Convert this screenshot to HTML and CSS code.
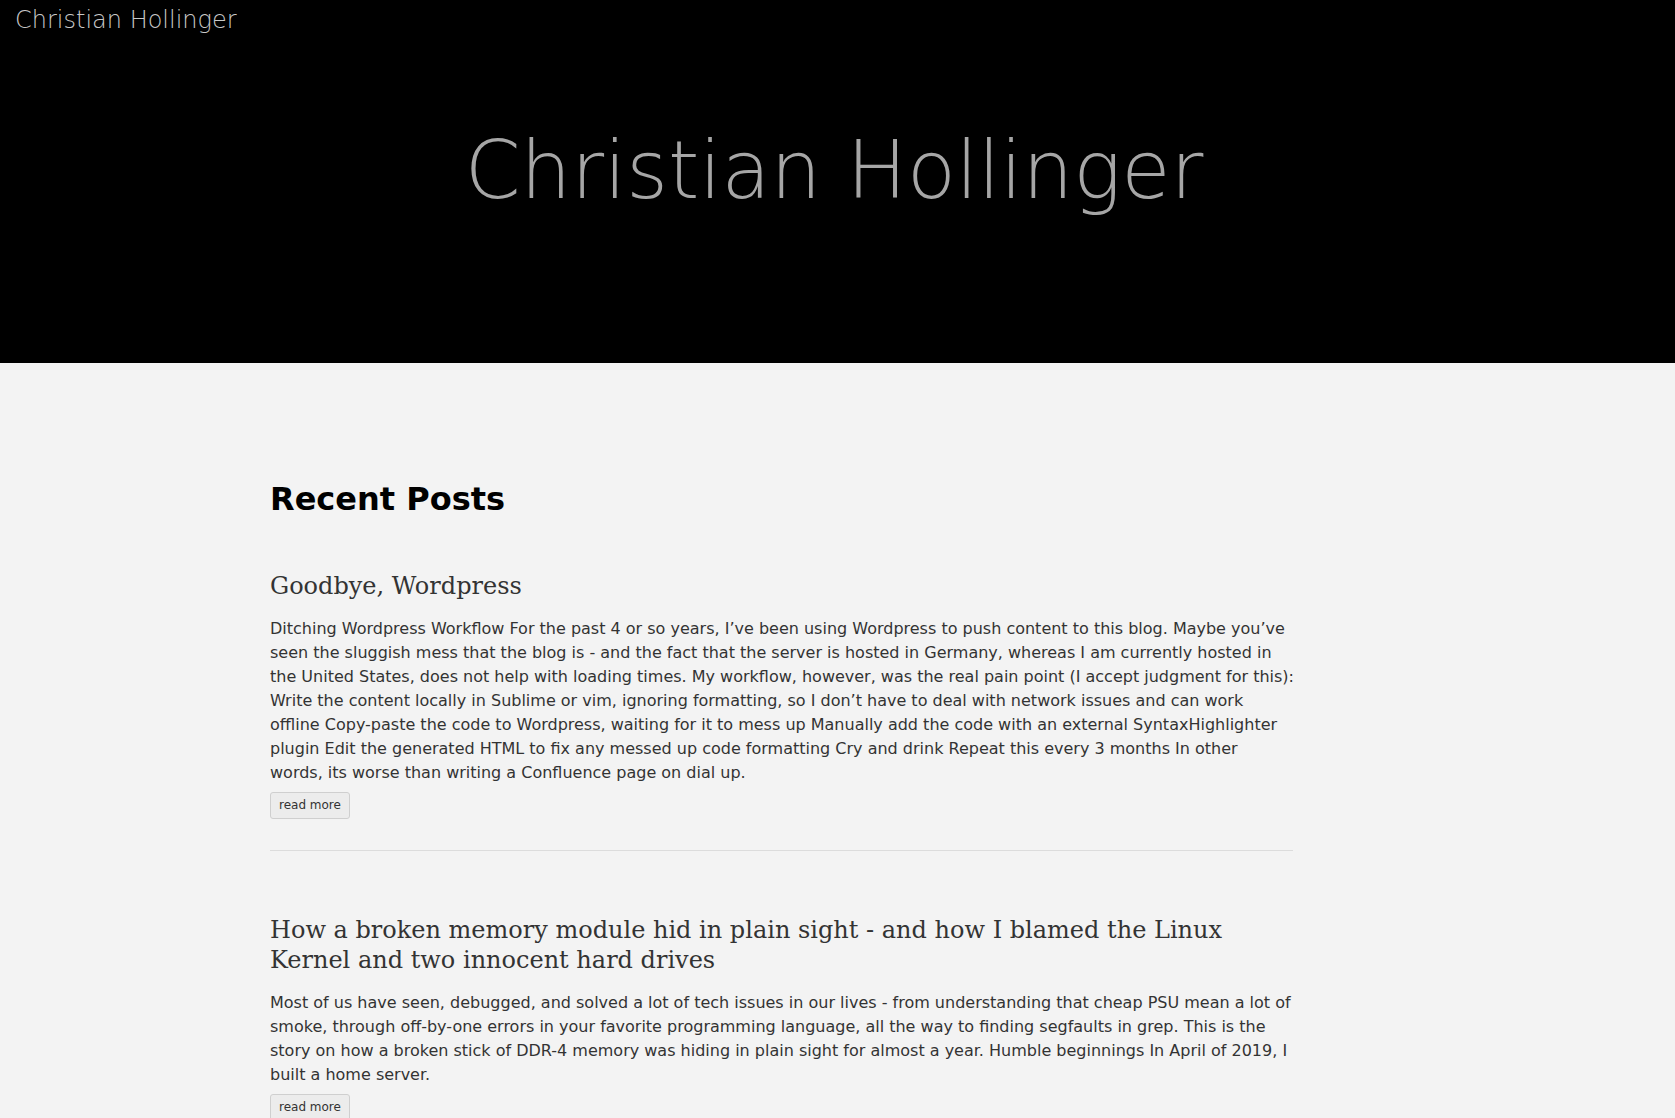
FILE: index.html
```html
<!DOCTYPE html>
<html lang="en">
<head>
<meta charset="utf-8">
<title>Christian Hollinger</title>
<link rel="stylesheet" href="styles.css">
</head>
<body>
<header class="hero">
  <nav class="topbar"><a class="brand" href="#">Christian Hollinger</a></nav>
  <h1 class="hero-title">Christian Hollinger</h1>
</header>
<main class="content">
  <h2 class="section-title">Recent Posts</h2>
  <article class="post">
    <h3 class="post-title">Goodbye, Wordpress</h3>
    <p class="post-excerpt">Ditching Wordpress Workflow For the past 4 or so years, I’ve been using Wordpress to push content to this blog. Maybe you’ve seen the sluggish mess that the blog is - and the fact that the server is hosted in Germany, whereas I am currently hosted in the United States, does not help with loading times. My workflow, however, was the real pain point (I accept judgment for this): Write the content locally in Sublime or vim, ignoring formatting, so I don’t have to deal with network issues and can work offline Copy-paste the code to Wordpress, waiting for it to mess up Manually add the code with an external SyntaxHighlighter plugin Edit the generated HTML to fix any messed up code formatting Cry and drink Repeat this every 3 months In other words, its worse than writing a Confluence page on dial up.</p>
    <a class="btn" href="#">read more</a>
  </article>
  <hr class="divider">
  <article class="post">
    <h3 class="post-title">How a broken memory module hid in plain sight - and how I blamed the Linux Kernel and two innocent hard drives</h3>
    <p class="post-excerpt">Most of us have seen, debugged, and solved a lot of tech issues in our lives - from understanding that cheap PSU mean a lot of smoke, through off-by-one errors in your favorite programming language, all the way to finding segfaults in grep. This is the story on how a broken stick of DDR-4 memory was hiding in plain sight for almost a year. Humble beginnings In April of 2019, I built a home server.</p>
    <a class="btn" href="#">read more</a>
  </article>
</main>
</body>
</html>
```
FILE: styles.css
```css
html, body {
  margin: 0;
  padding: 0;
}
body {
  background: #f3f3f3;
  font-family: "DejaVu Sans", sans-serif;
  color: #333;
}
.hero {
  background: #000;
  height: 363px;
  display: flex;
  flex-direction: column;
}
.topbar {
  padding: 5px 15px 0;
}
.brand {
  font-family: "DejaVu Sans ExtraLight", "DejaVu Sans", sans-serif;
  font-weight: 200;
  font-size: 24px;
  line-height: 30px;
  color: #c8c8c8;
  text-decoration: none;
}
.hero-title {
  margin: 88px 0 0;
  padding-right: 7px;
  text-align: center;
  font-family: "DejaVu Sans ExtraLight", "DejaVu Sans", sans-serif;
  font-weight: 200;
  font-size: 80px;
  line-height: 1.2;
  color: #a6a6a6;
}
.content {
  margin-left: 270px;
  width: 1025px;
  padding-top: 116px;
}
.section-title {
  margin: 0 0 52px;
  font-size: 32px;
  font-weight: bold;
  color: #000;
  line-height: 40px;
}
.post-title {
  margin: 0 0 16px;
  font-family: "DejaVu Serif", serif;
  font-weight: normal;
  font-size: 24px;
  line-height: 30px;
  color: #333;
}
.post-excerpt {
  margin: 0 0 7px;
  font-size: 16px;
  line-height: 24px;
  color: #333;
}
.btn {
  display: inline-block;
  font-size: 12px;
  line-height: 19px;
  padding: 3px 8px;
  color: #333;
  background: #ececec;
  border: 1px solid #cfcfcf;
  border-radius: 3px;
  text-decoration: none;
}
.divider {
  width: 1023px;
  margin: 31px 0 64px;
  border: 0;
  border-top: 1px solid #dcdcdc;
}
```
